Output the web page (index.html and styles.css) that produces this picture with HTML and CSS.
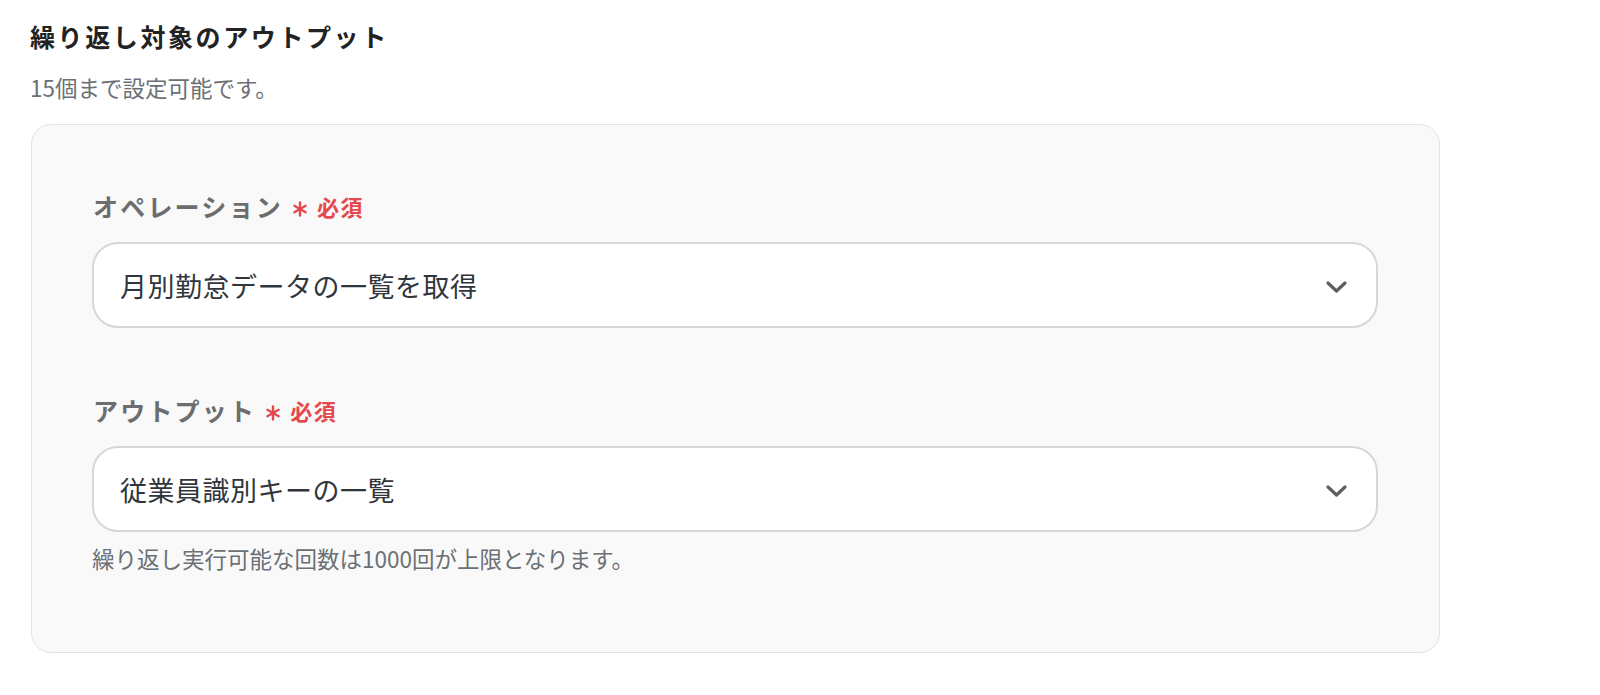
FILE: index.html
```html
<!DOCTYPE html>
<html lang="ja">
<head>
<meta charset="utf-8">
<title>繰り返し対象のアウトプット</title>
<link rel="stylesheet" href="styles.css">
</head>
<body>
<div class="page">
  <h2 class="title">繰り返し対象のアウトプット</h2>
  <p class="sub">15個まで設定可能です。</p>
  <div class="panel">
    <div class="field">
      <div class="label">
        <span class="label-text">オペレーション</span>
        <svg class="ast" width="16" height="16" viewBox="0 0 16 16"><g stroke="#e5484d" stroke-width="2.4" stroke-linecap="round"><line x1="8" y1="1.5" x2="8" y2="14.5"/><line x1="2.4" y1="4.8" x2="13.6" y2="11.2"/><line x1="2.4" y1="11.2" x2="13.6" y2="4.8"/></g></svg>
        <span class="req">必須</span>
      </div>
      <div class="select">
        <span class="value">月別勤怠データの一覧を取得</span>
        <svg class="chev" width="21" height="12" viewBox="0 0 21 12"><polyline points="2,2 10.5,10 19,2" fill="none" stroke="#5f5f5f" stroke-width="3.2" stroke-linecap="round" stroke-linejoin="round"/></svg>
      </div>
    </div>
    <div class="field field-2">
      <div class="label">
        <span class="label-text">アウトプット</span>
        <svg class="ast" width="16" height="16" viewBox="0 0 16 16"><g stroke="#e5484d" stroke-width="2.4" stroke-linecap="round"><line x1="8" y1="1.5" x2="8" y2="14.5"/><line x1="2.4" y1="4.8" x2="13.6" y2="11.2"/><line x1="2.4" y1="11.2" x2="13.6" y2="4.8"/></g></svg>
        <span class="req">必須</span>
      </div>
      <div class="select">
        <span class="value">従業員識別キーの一覧</span>
        <svg class="chev" width="21" height="12" viewBox="0 0 21 12"><polyline points="2,2 10.5,10 19,2" fill="none" stroke="#5f5f5f" stroke-width="3.2" stroke-linecap="round" stroke-linejoin="round"/></svg>
      </div>
      <p class="help">繰り返し実行可能な回数は1000回が上限となります。</p>
    </div>
  </div>
</div>
</body>
</html>
```

FILE: styles.css
```css
html, body {
  margin: 0;
  padding: 0;
  background: #ffffff;
}
body {
  font-family: "Noto Sans CJK JP", "Noto Sans", sans-serif;
}
.page {
  padding: 20px 0 0 30px;
}
.title {
  margin: 0;
  font-size: 25px;
  line-height: 33px;
  font-weight: 700;
  letter-spacing: 2.6px;
  color: #222222;
}
.sub {
  margin: 19px 0 0;
  font-size: 22.5px;
  line-height: 30px;
  color: #6b7076;
}
.panel {
  box-sizing: border-box;
  width: 1409px;
  margin: 22px 0 0 1px;
  padding: 63px 61px 79px 60px;
  background: #f9f9f9;
  border: 1px solid #e2e2e2;
  border-radius: 20px;
}
.field {
  display: flex;
  flex-direction: column;
}
.field-2 {
  margin-top: 64px;
}
.label {
  display: flex;
  align-items: center;
  height: 36px;
  margin-bottom: 18px;
  padding-left: 1px;
}
.label-text {
  font-size: 25px;
  font-weight: 700;
  letter-spacing: 2.2px;
  color: #6d6d6d;
}
.ast {
  margin: 6px 9px 0 9px;
}
.req {
  font-size: 22px;
  font-weight: 700;
  letter-spacing: 1.5px;
  color: #e5484d;
}
.select {
  box-sizing: border-box;
  height: 86px;
  display: flex;
  align-items: center;
  justify-content: space-between;
  padding: 0 29px 0 26px;
  background: #ffffff;
  border: 2px solid #d3d8dd;
  border-radius: 26px;
}
.value {
  font-size: 27px;
  letter-spacing: 0.5px;
  color: #30363c;
}
.chev {
  display: block;
  margin-top: 4px;
}
.help {
  margin: 11px 0 0;
  font-size: 22.5px;
  line-height: 30px;
  color: #6b7076;
}
```
